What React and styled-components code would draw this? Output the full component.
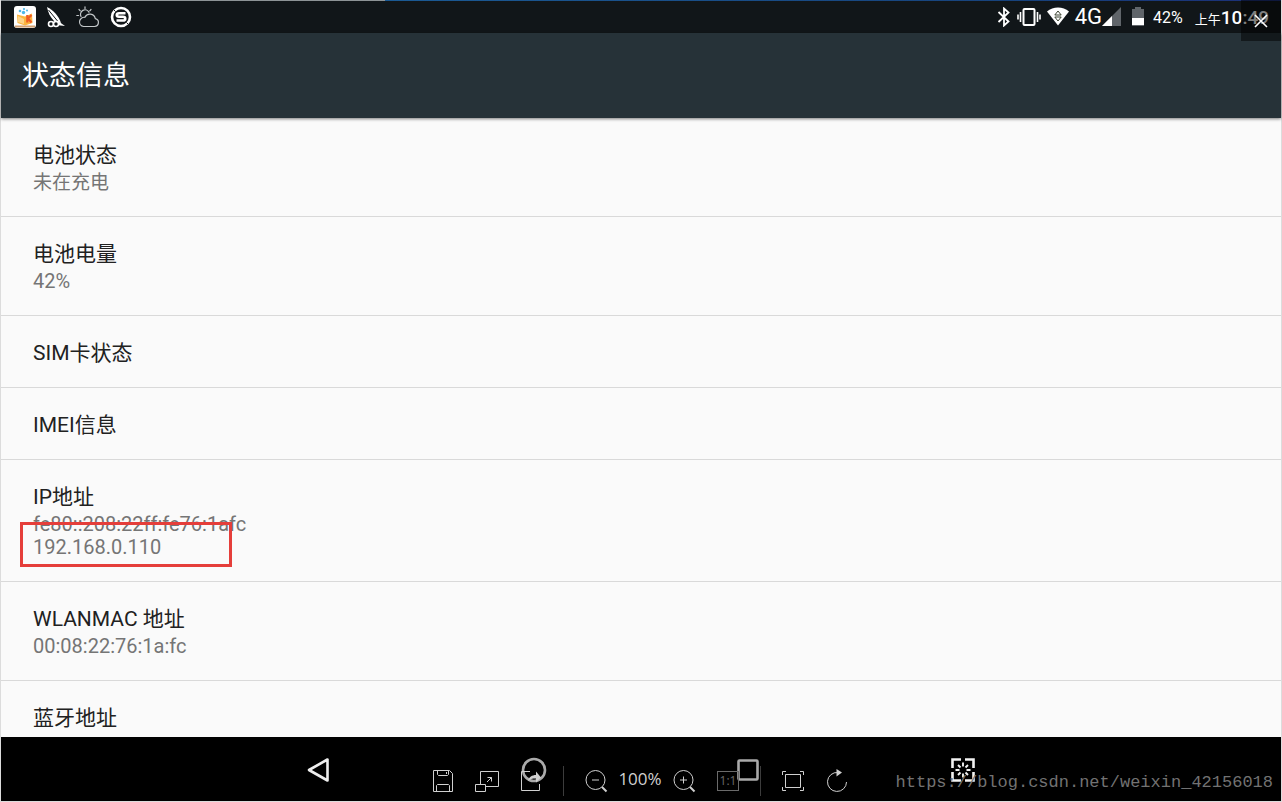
import React from "react";
import styled, { createGlobalStyle } from "styled-components";

const rows = [
    { title: "电池状态", lines: ["未在充电"] },
    { title: "电池电量", lines: ["42%"], numeric: true },
    { title: "SIM卡状态", lines: [] },
    { title: "IMEI信息", lines: [] },
    { title: "IP地址", lines: ["fe80::208:22ff:fe76:1afc", "192.168.0.110"], numeric: true, marked: true },
    { title: "WLANMAC 地址", lines: ["00:08:22:76:1a:fc"], numeric: true },
    { title: "蓝牙地址", lines: [] },
];

const StatusBar = () => (
    <StatusWrap>
        <IconGroup>
            <svg width="22" height="22" viewBox="0 0 22 22">
                <rect width="22" height="22" rx="3" fill="#fff" />
                <path d="M3 8.500l8 2 7-3 .5 9.500-7.500 2.500-7.500-2.500z" fill="#fcb53f" />
                <path d="M4 10l6 3v5l-6-2z" fill="#fdd58a" />
                <path d="M13.300 9v7.500M17.500 9l-3.500 3.500 3.500 4" stroke="#ee5a24" strokeWidth="2.200" fill="none" />
                <circle cx="6" cy="5" r="1.300" fill="#4db8e8" />
                <circle cx="10" cy="3" r="1.100" fill="#4db8e8" />
                <circle cx="9.500" cy="6.500" r="1.700" fill="#4db8e8" />
                <circle cx="13" cy="4.500" r="1" fill="#4db8e8" />
                <path d="M1 20.500h20" stroke="#d2a070" strokeWidth="2" />
            </svg>
            <svg width="20" height="22" viewBox="0 0 20 22">
                <path d="M1 1c6 3 12 9 14 16l-7-2C4 11 2 6 1 1z" fill="#fff" />
                <path d="M2.500 4l9 11" stroke="#111619" strokeWidth="1" />
                <path d="M12 15l7 5-9-1z" fill="#fff" />
                <circle cx="5" cy="18" r="2.500" fill="#111619" stroke="#fff" strokeWidth="1.600" />
                <circle cx="10" cy="18" r="2.500" fill="#111619" stroke="#fff" strokeWidth="1.600" />
            </svg>
            <svg width="24" height="22" viewBox="0 0 24 22" fill="none" stroke="#c4c8ca" strokeWidth="1.200" strokeLinecap="round">
                <path d="M7.500 20.500h11a4 4 0 0 0 .8-7.900 5.500 5.500 0 0 0-10.400-1.300A4.600 4.600 0 0 0 7.500 20.500z" />
                <path d="M5 10.500a4.500 4.500 0 0 1 8-4.200" />
                <path d="M9 .8v1.700M3 3.500l1.300 1.300M15 3.500l-1.200 1.300M.8 9.500h1.800" />
            </svg>
            <svg width="22" height="22" viewBox="0 0 22 22">
                <circle cx="11" cy="11" r="9" fill="none" stroke="#fff" strokeWidth="2.600" />
                <path d="M15.500 7.300H9c-3 0-3 3.500 0 3.500h4c3 0 3 3.700 0 3.700H6.500" fill="none" stroke="#fff" strokeWidth="2.600" />
                <path d="M3.500 3.500l2 2M16.500 16.500l2 2" stroke="#111619" strokeWidth="1" />
            </svg>
        </IconGroup>
        <SystemGroup>
            <svg width="14" height="20" viewBox="0 0 14 20" fill="none" stroke="#fff" strokeWidth="1.800">
                <path d="M1.500 5l10 9.500L7 18.500v-17l4.500 4L1.500 15" />
            </svg>
            <svg width="24" height="20" viewBox="0 0 24 20" fill="none" stroke="#fff">
                <rect x="6.500" y="2" width="11" height="16" rx="1" strokeWidth="2" />
                <path d="M3.500 5v10M20.500 5v10" strokeWidth="1.600" />
                <path d="M1 7.500v5M23 7.500v5" strokeWidth="1.600" />
            </svg>
            <svg width="22" height="20" viewBox="0 0 22 20">
                <path d="M0 4.500C6-1 16-1 22 4.500L11 18.500z" fill="#fff" />
                <path d="M7.800 8L11 4l3.200 4zM7.800 10L11 14l3.200-4z" fill="none" stroke="#3b4230" strokeWidth="1" />
            </svg>
            <NetworkText>4G</NetworkText>
            <svg width="19" height="20" viewBox="0 0 19 20">
                <path d="M19 0v19H0z" fill="#60656a" />
                <path d="M10 9v10H0z" fill="#fff" />
            </svg>
            <Battery width="12" height="20" viewBox="0 0 12 20">
                <path d="M3 0h6v2h3v17H0V2h3z" fill="#60656a" />
                <path d="M0 11h12v7H0z" fill="#fff" />
            </Battery>
            <Percent>42%</Percent>
            <Clock><small>上午</small>10:49</Clock>
        </SystemGroup>
    </StatusWrap>
);

const InfoRow = ({ title, lines, numeric, marked }) => (
    <Row>
        <RowTitle>{title}</RowTitle>
        {lines.length > 0 && (
            <RowDetail $numeric={numeric}>
                {lines.map((line) => <p key={line}>{line}</p>)}
                {marked && <Marker />}
            </RowDetail>
        )}
    </Row>
);

const SystemNav = () => (
    <NavWrap>
        <NavButton aria-label="返回">
            <svg width="26" height="28" viewBox="0 0 26 28">
                <path d="M21.500 3.500v21L3 14z" fill="none" stroke="#eee" strokeWidth="2.600" strokeLinejoin="round" />
            </svg>
        </NavButton>
        <NavButton aria-label="主页">
            <svg width="26" height="26" viewBox="0 0 26 26">
                <circle cx="13" cy="13" r="11" fill="none" stroke="#aaa" strokeWidth="2.600" />
            </svg>
        </NavButton>
        <NavButton aria-label="最近">
            <svg width="22" height="22" viewBox="0 0 22 22">
                <rect x="1.500" y="1.500" width="19" height="19" rx="1" fill="none" stroke="#aaa" strokeWidth="2.600" />
            </svg>
        </NavButton>
        <NavButton aria-label="截图">
            <svg width="24" height="24" viewBox="0 0 24 24" fill="none" stroke="#f2f2f2" strokeWidth="2.600">
                <path d="M1.500 10V1.500H10M14 1.500h8.500V10M22.500 14v8.500H14M10 22.500H1.500V14" />
                <path d="M12 4.500v4M12 15.500v4M4.500 12h4M15.500 12h4M7 7l2.500 2.500M14.500 14.500L17 17M17 7l-2.500 2.500M9.500 14.500L7 17" strokeWidth="1.900" />
            </svg>
        </NavButton>
    </NavWrap>
);

const ViewerTools = () => (
    <ToolsWrap>
        <ToolButton aria-label="保存">
            <svg width="22" height="24" viewBox="0 0 22 24">
                <path d="M1.500 1.500h16l3 3v18h-19zM5.500 1.500v4l1 1h9l1-1v-4M14.500 3v2M4.500 22.500v-6l1-1h11l1 1v6" />
            </svg>
        </ToolButton>
        <ToolButton aria-label="调整大小">
            <svg width="24" height="24" viewBox="0 0 24 24">
                <path d="M5.500 15V2.500h18v15H11M.500 15.500h10v7H.500zM12 13l4.500-4.500M12.500 8.500h4v4" />
            </svg>
        </ToolButton>
        <ToolButton aria-label="分享">
            <svg width="22" height="24" viewBox="0 0 22 24">
                <path d="M10 2.500H1.500v19h18V15" />
                <path d="M8 12c1-4 4-6 8-6V2.500l5 6-5 5v-4c-4 0-6 .5-8 2.500z" fill="#d0d0d0" stroke="none" />
            </svg>
        </ToolButton>
        <Separator />
        <ToolButton aria-label="缩小">
            <svg width="24" height="24" viewBox="0 0 24 24">
                <circle cx="11.500" cy="11" r="9.500" /><path d="M8 11h7" />
                <path d="M18 18l4.500 4.500" strokeWidth="2" />
            </svg>
        </ToolButton>
        <Zoom>100%</Zoom>
        <ToolButton aria-label="放大">
            <svg width="24" height="24" viewBox="0 0 24 24">
                <circle cx="11.500" cy="11" r="9.500" /><path d="M8 11h7M11.500 7.500v7" />
                <path d="M18 18l4.500 4.500" strokeWidth="2" />
            </svg>
        </ToolButton>
        <ToolButton $dim>
            <ActualSize>1:1</ActualSize>
        </ToolButton>
        <Separator />
        <ToolButton aria-label="全屏">
            <svg width="24" height="22" viewBox="0 0 24 22">
                <path d="M4.500 4.500h15v13h-15zM1.500 5V1.500H5M19 1.500h3.500V5M22.500 17v3.500H19M5 20.500H1.500V17" />
            </svg>
        </ToolButton>
        <ToolButton aria-label="旋转">
            <svg width="22" height="24" viewBox="0 0 22 24">
                <path d="M12 3.500a9.500 9.500 0 1 0 8.500 9.500" />
                <path d="M10.500 0l5.500 3.500-5.500 4z" fill="#d0d0d0" stroke="none" />
            </svg>
        </ToolButton>
    </ToolsWrap>
);

const App = () => (
    <Screen>
        <GlobalStyle />
        <TopEdge />
        <StatusBar />
        <Header><h1>状态信息</h1></Header>
        <List>
            {rows.map((row) => <InfoRow key={row.title} {...row} />)}
        </List>
        <Bottom>
            <SystemNav />
            <ViewerTools />
            <Watermark>https://blog.csdn.net/weixin_42156018</Watermark>
        </Bottom>
        <CloseButton aria-label="关闭">
            <svg width="14" height="14" viewBox="0 0 14 14">
                <path d="M1 1l12 12M13 1L1 13" stroke="#fff" strokeWidth="1.600" />
            </svg>
        </CloseButton>
    </Screen>
);

const GlobalStyle = createGlobalStyle`
    * {
        box-sizing: border-box;
    }
    body, h1, h2, p, ul {
        margin: 0;
        padding: 0;
    }
    body {
        font-family: Roboto, "Noto Sans CJK SC", sans-serif;
    }
    button {
        padding: 0;
        border: 0;
        background: none;
        font: inherit;
        color: inherit;
    }
    svg {
        display: block;
        flex: none;
    }
`;

const Screen = styled.div`
    position: relative;
    display: flex;
    flex-direction: column;
    height: 100vh;
    border: 1px solid #dcdcdc;
    border-top: 0;
    background-color: #fafafa;
`;

const TopEdge = styled.div`
    flex: none;
    height: 1px;
    background: linear-gradient(to right, #8d9396 30%, #1b5a94 30%, #17427c 80%, #1c2f78);
`;

const StatusWrap = styled.div`
    display: flex;
    flex: none;
    justify-content: space-between;
    height: 32px;
    padding: 0 12px 0 13px;
    background-color: #111619;
    color: #fff;
`;

const IconGroup = styled.div`
    display: flex;
    align-items: center;
    gap: 10px;
`;

const SystemGroup = styled.div`
    display: flex;
    align-items: center;
    gap: 6px;
`;

const NetworkText = styled.span`
    margin-right: -6px;
    font-size: 22px;
    line-height: 32px;
`;

const Battery = styled.svg`
    margin-left: 5px;
`;

const Percent = styled.span`
    margin-left: 3px;
    font-size: 16px;
`;

const Clock = styled.span`
    margin-left: 6px;
    font-size: 19px;
    font-weight: 500;
    small {
        font-size: 13px;
        font-weight: 400;
    }
`;

const Header = styled.header`
    position: relative;
    display: flex;
    flex: none;
    align-items: center;
    height: 85px;
    padding: 1px 21px 0;
    background-color: #263238;
    color: #fff;
    box-shadow: 0 1px 3px rgba(0, 0, 0, 0.5);
    h1 {
        font-size: 27px;
        font-weight: 400;
        line-height: 40px;
    }
`;

const List = styled.ul`
    flex: 1;
    min-height: 0;
    overflow: hidden;
    list-style: none;
`;

const Row = styled.li`
    padding: 23px 32px 20px;
    border-bottom: 1px solid #d9d9d9;
`;

const RowTitle = styled.h2`
    font-size: 21px;
    font-weight: 400;
    line-height: 28px;
    color: #212121;
`;

const RowDetail = styled.div`
    position: relative;
    margin: 2px 0;
    font-size: ${props => props.$numeric ? "20px" : "19px"};
    line-height: 23px;
    color: #757575;
`;

const Marker = styled.div`
    position: absolute;
    top: 9px;
    left: -13px;
    width: 212px;
    height: 45px;
    border: 3px solid #e53e3a;
`;

const Bottom = styled.footer`
    position: relative;
    flex: none;
    height: 64px;
    background-color: #000;
`;

const NavWrap = styled.nav`
    display: grid;
    grid-template-columns: repeat(4, 1fr);
    width: 67%;
    height: 64px;
    margin: 0 auto;
    padding-top: 2px;
`;

const NavButton = styled.button`
    display: flex;
    align-items: center;
    justify-content: center;
`;

const ToolsWrap = styled.div`
    position: absolute;
    right: 2px;
    bottom: 4px;
    left: 0;
    display: flex;
    align-items: center;
    justify-content: center;
    pointer-events: none;
    color: #d0d0d0;
`;

const ToolButton = styled.button`
    display: flex;
    align-items: center;
    justify-content: center;
    width: 44px;
    height: 32px;
    color: ${props => props.$dim ? "#6a6a6a" : "#d0d0d0"};
    pointer-events: auto;
    svg {
        fill: none;
        stroke: currentColor;
        stroke-width: 1;
    }
`;

const ActualSize = styled.span`
    width: 22px;
    height: 20px;
    border: 1px solid #6a6a6a;
    font-family: "Open Sans", sans-serif;
    font-size: 12px;
    line-height: 18px;
`;

const Separator = styled.span`
    width: 1px;
    height: 30px;
    margin: 0 10px;
    background-color: #3c3c3c;
`;

const Zoom = styled.span`
    width: 44px;
    padding-bottom: 4px;
    font-family: "Open Sans", sans-serif;
    font-size: 17px;
    line-height: 24px;
    text-align: center;
`;

const Watermark = styled.span`
    position: absolute;
    right: 8px;
    bottom: 6px;
    font-family: "Liberation Mono", monospace;
    font-size: 17px;
    line-height: 24px;
    color: #727272;
`;

const CloseButton = styled.button`
    position: absolute;
    top: 0;
    right: 0;
    display: flex;
    align-items: center;
    justify-content: center;
    width: 40px;
    height: 41px;
    background-color: rgba(0, 0, 0, 0.5);
`;

export default App;
